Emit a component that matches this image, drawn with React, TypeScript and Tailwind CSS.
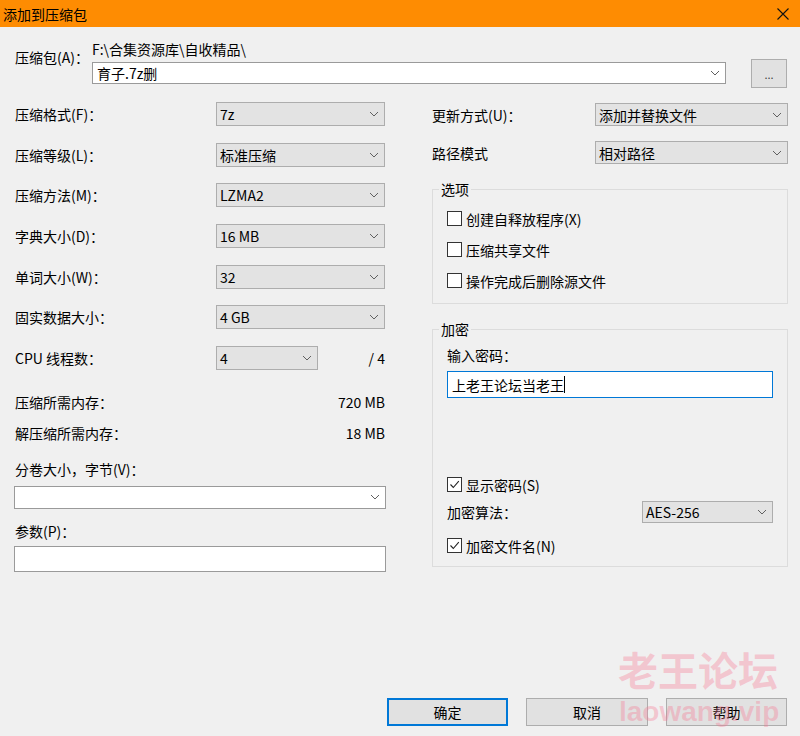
import React from "react"

const Chevron = () => (
    <svg width="10" height="6" viewBox="0 0 10 6" className="shrink-0">
        <path d="M1 1 L5 5 L9 1" fill="none" stroke="#606060" strokeWidth="1" />
    </svg>
)

function Select({ value, className }: { value: string; className: string }) {
    return (
        <div className={"flex items-center justify-between border border-[#adadad] bg-[#e3e3e3] pl-[3px] pr-[5px] " + className}>
            <span>{value}</span>
            <Chevron />
        </div>
    )
}

function Checkbox({ checked, label }: { checked?: boolean; label: string }) {
    return (
        <div className="flex items-center h-[15px]">
            <div className="w-[15px] h-[15px] border border-[#333] bg-white flex items-center justify-center">
                {checked && (
                    <svg width="13" height="13" viewBox="0 0 13 13">
                        <path d="M2.5 6.5 L5.3 9.5 L10.8 3.2" fill="none" stroke="#222" strokeWidth="1.1" />
                    </svg>
                )}
            </div>
            <span className="ml-[4px]">{label}</span>
        </div>
    )
}

function Row({ label, value }: { label: string; value: string }) {
    return (
        <div className="h-[24px] flex items-center justify-between">
            <span>{label}</span>
            <Select value={value} className="w-[169px] h-[24px]" />
        </div>
    )
}

export default function App() {
    return (
        <div className="relative w-[800px] h-[736px] bg-[#f0f0f0] overflow-hidden flex flex-col text-[14px] leading-[16px] text-black font-['Noto_Sans_CJK_SC',sans-serif]">
            {/* title bar */}
            <div className="h-[27px] shrink-0 bg-[#fe8c02] flex items-center justify-between pl-[3px] pr-[11px]">
                <span>添加到压缩包</span>
                <svg width="12" height="12" viewBox="0 0 12 12">
                    <path d="M0.5 0.5 L11.5 11.5 M11.5 0.5 L0.5 11.5" stroke="#111" strokeWidth="1.1" />
                </svg>
            </div>

            {/* archive name */}
            <div className="flex pt-[14px] pl-[15px] pr-[13px]">
                <div className="w-[77px] pt-[8px]">压缩包(A)：</div>
                <div className="w-[634px]">
                    <div className="h-[16px]">F:\合集资源库\自收精品\</div>
                    <div className="mt-[5px] h-[22px] bg-white border border-[#9a9a9a] flex items-center justify-between pl-[4px] pr-[5px]">
                        <span>育子.7z删</span>
                        <Chevron />
                    </div>
                </div>
                <div className="ml-[25px] mt-[18px] w-[36px] h-[29px] border border-[#adadad] bg-[#e1e1e1] flex items-center justify-center text-[11px] text-[#444]">
                    ...
                </div>
            </div>

            {/* main columns */}
            <div className="mt-[14px] flex pl-[15px] pr-[12px]">
                {/* left */}
                <div className="w-[370px] flex flex-col">
                    <div className="flex flex-col gap-[16.67px]">
                        <Row label="压缩格式(F)：" value="7z" />
                        <Row label="压缩等级(L)：" value="标准压缩" />
                        <Row label="压缩方法(M)：" value="LZMA2" />
                        <Row label="字典大小(D)：" value="16 MB" />
                        <Row label="单词大小(W)：" value="32" />
                        <Row label="固实数据大小：" value="4 GB" />
                        <div className="h-[24px] flex items-center">
                            <span className="w-[201px]">CPU 线程数：</span>
                            <Select value="4" className="w-[102px] h-[24px]" />
                            <span className="ml-auto">/ 4</span>
                        </div>
                    </div>
                    <div className="mt-[22px] h-[20px] flex items-center justify-between">
                        <span>压缩所需内存：</span>
                        <span>720 MB</span>
                    </div>
                    <div className="mt-[11px] h-[20px] flex items-center justify-between">
                        <span>解压缩所需内存：</span>
                        <span>18 MB</span>
                    </div>
                    <div className="mt-[16px] h-[20px] flex items-center">分卷大小，字节(V)：</div>
                    <div className="mt-[7px] -ml-px w-[372px] h-[23px] bg-white border border-[#9a9a9a] flex items-center justify-end pr-[5px]">
                        <Chevron />
                    </div>
                    <div className="mt-[12px] h-[20px] flex items-center">参数(P)：</div>
                    <div className="mt-[5px] -ml-px w-[372px] h-[26px] bg-white border border-[#9a9a9a]" />
                </div>

                {/* right */}
                <div className="ml-[47px] w-[356px] pt-[1px] flex flex-col">
                    <div className="h-[23px] flex items-center justify-between">
                        <span>更新方式(U)：</span>
                        <Select value="添加并替换文件" className="w-[193px] h-[23px]" />
                    </div>
                    <div className="mt-[15px] h-[23px] flex items-center justify-between">
                        <span>路径模式</span>
                        <Select value="相对路径" className="w-[193px] h-[23px]" />
                    </div>

                    <fieldset className="mt-[17px] border border-[#dcdcdc]">
                        <legend className="ml-[6px] px-[2px] leading-[16px]">选项</legend>
                        <div className="flex flex-col gap-[16px] pl-[14px] pt-[14px] pb-[15px]">
                            <Checkbox label="创建自释放程序(X)" />
                            <Checkbox label="压缩共享文件" />
                            <Checkbox label="操作完成后删除源文件" />
                        </div>
                    </fieldset>

                    <fieldset className="mt-[17px] border border-[#dcdcdc]">
                        <legend className="ml-[6px] px-[2px] leading-[16px]">加密</legend>
                        <div className="flex flex-col px-[14px] pt-[10px] pb-[13px]">
                            <div className="h-[16px]">输入密码：</div>
                            <div className="mt-[8px] h-[27px] bg-white border border-[#0078d7] flex items-center pl-[4px]">
                                <span>上老王论坛当老王</span>
                                <span className="w-px h-[17px] bg-black" />
                            </div>
                            <div className="mt-[79px]">
                                <Checkbox checked label="显示密码(S)" />
                            </div>
                            <div className="mt-[9px] h-[22px] flex items-center justify-between">
                                <span>加密算法：</span>
                                <Select value="AES-256" className="w-[131px] h-[22px]" />
                            </div>
                            <div className="mt-[15px]">
                                <Checkbox checked label="加密文件名(N)" />
                            </div>
                        </div>
                    </fieldset>
                </div>
            </div>

            <div className="flex-1" />

            {/* buttons */}
            <div className="flex justify-end gap-[18px] pr-[13px] pb-[10px]">
                <div className="w-[121px] h-[28px] border-2 border-[#0078d7] bg-[#e1e1e1] flex items-center justify-center">确定</div>
                <div className="w-[122px] h-[28px] border border-[#adadad] bg-[#e1e1e1] flex items-center justify-center">取消</div>
                <div className="w-[121px] h-[28px] border border-[#adadad] bg-[#e1e1e1] flex items-center justify-center">帮助</div>
            </div>

            {/* watermark */}
            <div className="absolute left-[618px] top-[645px] text-[40px] leading-[48px] font-bold text-[rgba(247,120,145,0.35)] pointer-events-none">
                老王论坛
            </div>
            <div className="absolute left-[619px] top-[695px] text-[28px] leading-[34px] font-bold font-['Liberation_Sans',sans-serif] text-[rgba(247,120,145,0.35)] pointer-events-none">
                laowang.vip
            </div>
        </div>
    )
}
